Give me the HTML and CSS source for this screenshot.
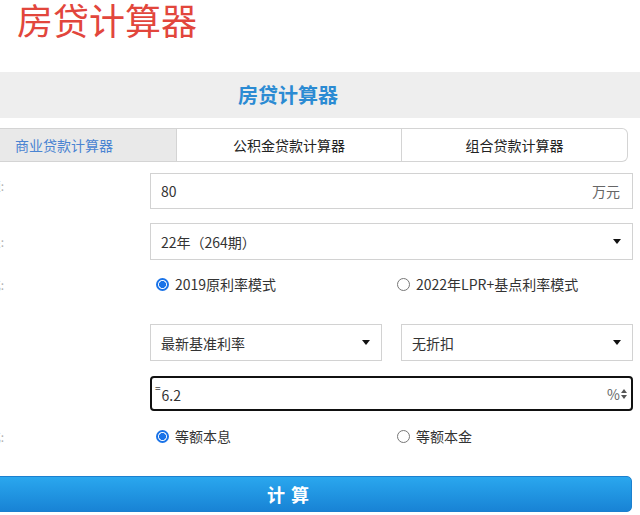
FILE: index.html
```html
<!DOCTYPE html>
<html lang="zh-CN">
<head>
<meta charset="utf-8">
<title>房贷计算器</title>
<link rel="stylesheet" href="styles.css">
</head>
<body>
<h1 class="title">房贷计算器</h1>
<div class="page">
  <div class="band">房贷计算器</div>
  <div class="tabs">
    <div class="tab tab-active">商业贷款计算器</div>
    <div class="tab tab-mid">公积金贷款计算器</div>
    <div class="tab tab-last">组合贷款计算器</div>
  </div>

  <div class="row row-amount">
    <div class="label label-top">贷款总额:</div>
    <div class="field">
      <span class="val">80</span>
      <span class="unit">万元</span>
    </div>
  </div>

  <div class="row row-term">
    <div class="label">贷款期限:</div>
    <div class="field select">
      <span class="val">22年（264期）</span>
      <span class="caret"></span>
    </div>
  </div>

  <div class="row row-mode">
    <div class="label">利率方式:</div>
    <div class="radios">
      <div class="radio"><span class="dot checked"></span>2019原利率模式</div>
      <div class="radio"><span class="dot"></span>2022年LPR+基点利率模式</div>
    </div>
  </div>

  <div class="row row-rates">
    <div class="label blank"></div>
    <div class="pair">
      <div class="field select half">
        <span class="val">最新基准利率</span>
        <span class="caret"></span>
      </div>
      <div class="field select half">
        <span class="val">无折扣</span>
        <span class="caret"></span>
      </div>
    </div>
  </div>

  <div class="row row-rate">
    <div class="label blank"></div>
    <div class="field focused">
      <span class="val"><span class="eq">=</span>6.2</span>
      <span class="suffix">%<span class="spin"><i class="up"></i><i class="down"></i></span></span>
    </div>
  </div>

  <div class="row row-repay">
    <div class="label">还款方式:</div>
    <div class="radios">
      <div class="radio"><span class="dot checked"></span>等额本息</div>
      <div class="radio"><span class="dot"></span>等额本金</div>
    </div>
  </div>

  <div class="btn">计 算</div>
</div>
</body>
</html>
```

FILE: styles.css
```css
html, body {
  margin: 0;
  padding: 0;
  background: #ffffff;
  overflow: hidden;
}
body {
  width: 640px;
  height: 515px;
  font-family: "Noto Sans CJK SC", "Noto Sans", "Liberation Sans", sans-serif;
  color: #333333;
  font-size: 14px;
}
.title {
  margin: 0;
  padding-left: 17px;
  height: 38px;
  font-size: 36px;
  line-height: 38px;
  font-weight: 400;
  color: #e2463c;
}
.page {
  margin-left: -56px;
  width: 689px;
}
.band {
  margin-top: 34px;
  width: 696px;
  height: 46px;
  box-sizing: border-box;
  padding-right: 8px;
  background: #eeeeee;
  color: #2b8bd3;
  font-size: 20px;
  font-weight: 700;
  line-height: 46px;
  text-align: center;
}
.tabs {
  margin-top: 10px;
  display: flex;
  width: 684px;
  height: 34px;
}
.tab {
  box-sizing: border-box;
  height: 34px;
  line-height: 32px;
  font-size: 14px;
  color: #222222;
  border: 1px solid #d4d4d4;
  background: #ffffff;
  text-align: center;
}
.tab-active {
  width: 232px;
  text-align: left;
  padding-left: 70px;
  background: #e9e9e9;
  color: #4a84d2;
  border-right: none;
}
.tab-mid {
  width: 226px;
}
.tab-last {
  width: 226px;
  border-left: none;
  border-radius: 0 6px 6px 0;
}
.row {
  display: grid;
  grid-template-columns: 206px 483px;
  align-items: center;
}
.label {
  box-sizing: border-box;
  padding-right: 146px;
  text-align: right;
  font-size: 12px;
  color: #b0b0b0;
  white-space: nowrap;
  overflow: hidden;
}
.label-top {
  align-self: start;
  padding-top: 4px;
}
.field {
  box-sizing: border-box;
  height: 36px;
  border: 1px solid #d2d2d2;
  background: #ffffff;
  display: flex;
  align-items: center;
  justify-content: space-between;
  padding: 0 12px 0 10px;
  font-size: 14px;
  color: #333333;
}
.row-amount { margin-top: 11px; }
.row-term { margin-top: 14px; }
.row-term .field { height: 37px; }
.unit { color: #666666; }
.caret {
  width: 0;
  height: 0;
  border-left: 4px solid transparent;
  border-right: 4px solid transparent;
  border-top: 5px solid #111111;
  margin-right: -1px;
}
.row-mode { margin-top: 12px; height: 24px; }
.radios {
  display: grid;
  grid-template-columns: 241px 1fr;
  padding-left: 6px;
}
.radio {
  display: flex;
  align-items: center;
  height: 24px;
  font-size: 14px;
  color: #333333;
}
.dot {
  box-sizing: border-box;
  width: 13px;
  height: 13px;
  border-radius: 50%;
  border: 1px solid #777777;
  margin-right: 6px;
  background: #ffffff;
}
.dot.checked {
  border: 2px solid #1a73e8;
  background: radial-gradient(circle, #1a73e8 0 3.2px, #ffffff 3.8px);
}
.row-rates { margin-top: 28px; }
.pair {
  display: grid;
  grid-template-columns: 232px 232px;
  column-gap: 19px;
}
.half { height: 37px; }
.row-rate { margin-top: 15px; }
.focused {
  height: 35px;
  border: 2px solid #111111;
  border-radius: 4px;
  padding: 0 4px 0 3px;
}
.eq {
  display: inline-block;
  font-size: 10px;
  line-height: 10px;
  vertical-align: 9px;
  color: #444444;
  margin-right: 1px;
}
.suffix {
  display: flex;
  align-items: center;
  color: #666666;
  font-size: 14px;
}
.spin {
  display: flex;
  flex-direction: column;
  gap: 2px;
  margin-left: 1px;
}
.spin i {
  width: 0;
  height: 0;
  border-left: 3.5px solid transparent;
  border-right: 3.5px solid transparent;
}
.spin .up { border-bottom: 4px solid #555555; }
.spin .down { border-top: 4px solid #555555; }
.row-repay { margin-top: 13px; height: 24px; }
.btn {
  margin-top: 28px;
  box-sizing: border-box;
  width: 688px;
  height: 36px;
  border: 1px solid #1b80cf;
  border-radius: 5px;
  background: linear-gradient(#2aa7ee, #1883d5);
  color: #ffffff;
  font-size: 18px;
  font-weight: 700;
  line-height: 34px;
  text-align: center;
  word-spacing: 2px;
}
```
